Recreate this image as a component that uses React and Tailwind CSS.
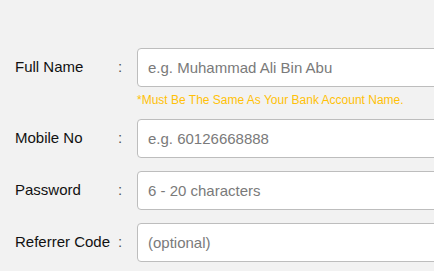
export default function App() {
  const fields = [
    { label: "Full Name", placeholder: "e.g. Muhammad Ali Bin Abu", hint: "*Must Be The Same As Your Bank Account Name." },
    { label: "Mobile No", placeholder: "e.g. 60126668888" },
    { label: "Password", placeholder: "6 - 20 characters", type: "password" },
    { label: "Referrer Code", placeholder: "(optional)" },
  ];

  return (
    <div className="w-[434px] h-[271px] overflow-hidden bg-[#f2f2f2] pt-[48px] font-['Liberation_Sans',Arial,sans-serif]">
      {fields.map((f, i) => (
        <div key={i} className="mb-[13px]">
          <div className="flex items-center">
            <span className="w-[118px] shrink-0 pl-[15px] text-[15px] text-[#111] whitespace-nowrap">{f.label}</span>
            <span className="w-[19px] shrink-0 text-[15px] text-[#555]">:</span>
            <input
              type={f.type || "text"}
              placeholder={f.placeholder}
              className="w-[320px] shrink-0 h-[39px] rounded-[4px] border border-[#bdbdbd] bg-white px-[10px] text-[15px] placeholder:text-[#7a7a7a] outline-none"
            />
          </div>
          {f.hint && (
            <div className="ml-[137px] mt-[4px] -mb-[3px] text-[12px] text-[#ffc107] whitespace-nowrap">{f.hint}</div>
          )}
        </div>
      ))}
    </div>
  );
}
